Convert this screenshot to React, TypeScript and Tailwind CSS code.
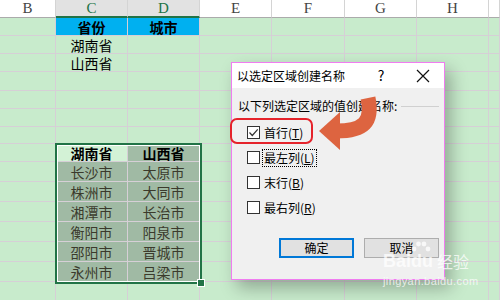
import React from 'react';

const cols = ['B', 'C', 'D', 'E', 'F', 'G', 'H', ''];
const rowHeights = [18, 18, 18, 19, 18, 18, 17, 18, 20, 20, 20, 20, 20, 20, 20, 20];

type Cell = { text?: string; bold?: boolean; bg?: string };

const cells: Record<string, Cell> = {
  '0-1': { text: '省份', bold: true, bg: 'bg-[#00b0f0]' },
  '0-2': { text: '城市', bold: true, bg: 'bg-[#00b0f0]' },
  '1-1': { text: '湖南省' },
  '2-1': { text: '山西省' },
  '7-1': { text: '湖南省', bold: true, bg: 'bg-[#d3f2d6]' },
  '7-2': { text: '山西省', bold: true, bg: 'bg-[#a2bca6]' },
};

const data = [
  ['长沙市', '太原市'],
  ['株洲市', '大同市'],
  ['湘潭市', '长治市'],
  ['衡阳市', '阳泉市'],
  ['邵阳市', '晋城市'],
  ['永州市', '吕梁市'],
];
data.forEach((r, i) => {
  cells[`${8 + i}-1`] = { text: r[0], bg: 'bg-[#a0baa4]' };
  cells[`${8 + i}-2`] = { text: r[1], bg: 'bg-[#a0baa4]' };
});

const options = [
  { label: '首行', key: 'T', checked: true },
  { label: '最左列', key: 'L', focus: true },
  { label: '末行', key: 'B' },
  { label: '最右列', key: 'R' },
];

const grid = 'grid grid-cols-[56px_72px_72px_72px_73px_72px_72px_1fr]';

export default function App() {
  return (
    <div className="relative w-[500px] h-[300px] overflow-hidden bg-[#c8ebcc] font-['Noto_Sans_CJK_SC',sans-serif]">
      {/* column headers */}
      <div className={`${grid} h-[18px] bg-white`}>
        {cols.map((c, i) => {
          const sel = c === 'C' || c === 'D';
          return (
            <div
              key={i}
              className={`flex items-center justify-center border-r border-[#d4d4d4] font-['Liberation_Serif',serif] text-[15px] leading-none ${
                sel
                  ? 'bg-[#e2e2e2] text-[#217346] border-b-2 border-b-[#217346]'
                  : 'text-[#444] border-b border-b-[#ababab]'
              }`}
            >
              {c}
            </div>
          );
        })}
      </div>

      {/* sheet rows */}
      {rowHeights.map((h, r) => (
        <div key={r} className={grid} style={{ height: h }}>
          {cols.map((_, c) => {
            const cell = cells[`${r}-${c}`];
            return (
              <div
                key={c}
                className={`flex items-center justify-center border-r border-b border-[#d6cfd6] text-[14px] leading-none ${
                  cell?.bg ?? ''
                } ${cell?.bold ? 'font-bold text-black' : r >= 8 ? 'text-[#3b3a2c]' : 'text-black'}`}
              >
                {cell?.text}
              </div>
            );
          })}
        </div>
      ))}

      {/* selection outline */}
      <div className="absolute left-[55px] top-[143px] w-[147px] h-[141px] border-2 border-[#217346]">
        <div className="w-full h-full border border-white" />
        <div className="absolute -right-[5px] -bottom-[5px] w-[8px] h-[8px] bg-[#217346] border border-white" />
      </div>

      {/* dialog */}
      <div className="absolute left-[231px] top-[62px] w-[214px] h-[218px] border border-[#f07cf0] bg-[#f0f0f0] shadow-[6px_8px_16px_rgba(0,0,0,0.28)] text-[12px] text-black">
        <div className="flex items-center h-[25px] bg-white pl-[5px]">
          <span className="flex-1">以选定区域创建名称</span>
          <span className="w-[20px] text-center text-[14px] mr-[25px]">?</span>
          <svg width="14" height="14" viewBox="0 0 14 14" className="mr-[14px]">
            <path d="M1 1L13 13M13 1L1 13" stroke="#111" strokeWidth="1.2" />
          </svg>
        </div>
        <div className="flex items-center mt-[9px] pl-[6px] pr-[5px]">
          <span>以下列选定区域的值创建名称:</span>
          <div className="flex-1 h-px bg-[#d0d0d0] ml-[4px]" />
        </div>
        <div className="flex flex-col gap-[12px] mt-[11px] pl-[15px]">
          {options.map((o) => (
            <div key={o.key} className="flex items-center h-[13px]">
              <div className="w-[13px] h-[13px] border border-[#333] bg-white flex items-center justify-center">
                {o.checked && (
                  <svg width="11" height="11" viewBox="0 0 11 11">
                    <path d="M1.5 5.5L4.3 8.5L9.7 2.3" fill="none" stroke="#333" strokeWidth="1.2" />
                  </svg>
                )}
              </div>
              <span
                className={`ml-[3px] px-[1px] leading-[16px] ${
                  o.focus ? 'outline outline-1 outline-dotted outline-black' : ''
                }`}
              >
                {o.label}(<span className="underline">{o.key}</span>)
              </span>
            </div>
          ))}
        </div>
        <div className="flex gap-[10px] mt-[24px] pl-[47px]">
          <button className="w-[75px] h-[20px] border-2 border-[#0078d7] bg-[#e1e1e1] text-[12px] leading-none">
            确定
          </button>
          <button className="w-[75px] h-[20px] border border-[#adadad] bg-[#e1e1e1] text-[12px] leading-none">
            取消
          </button>
        </div>
      </div>

      {/* red highlight */}
      <div className="absolute left-[230px] top-[118px] w-[83px] h-[26px] border-2 border-[#e5232b] rounded-[7px]" />

      {/* orange arrow */}
      <svg className="absolute left-0 top-0" width="500" height="300" viewBox="0 0 500 300">
        <path d="M368 98 C373 122 364 131 336 131" fill="none" stroke="#dd6440" strokeWidth="15" />
        <path d="M319 131 L340 112 L340 150 Z" fill="#dd6440" />
      </svg>

      {/* watermark */}
      <div className="absolute left-[383px] top-[252px] text-white/75 leading-none">
        <div className="flex items-end font-['Liberation_Sans',sans-serif] font-bold text-[18px] leading-[18px]">
          <span>Bai</span>
          <span className="relative">
            <svg width="22" height="20" viewBox="0 0 22 20" className="absolute -top-[11px] -left-[1px]">
              <circle cx="4" cy="8" r="2.4" fill="rgba(255,255,255,0.75)" />
              <circle cx="8.5" cy="3" r="2.4" fill="rgba(255,255,255,0.75)" />
              <circle cx="14" cy="3" r="2.4" fill="rgba(255,255,255,0.75)" />
              <circle cx="18" cy="8" r="2.4" fill="rgba(255,255,255,0.75)" />
            </svg>
            du
          </span>
          <span className="ml-[4px] text-[16px] leading-[18px] font-['Noto_Sans_CJK_SC',sans-serif] font-normal">经验</span>
        </div>
        <div className="mt-[6px] text-[11px] font-['Liberation_Sans',sans-serif] tracking-[0.4px]">jingyan.baidu.com</div>
      </div>
    </div>
  );
}
